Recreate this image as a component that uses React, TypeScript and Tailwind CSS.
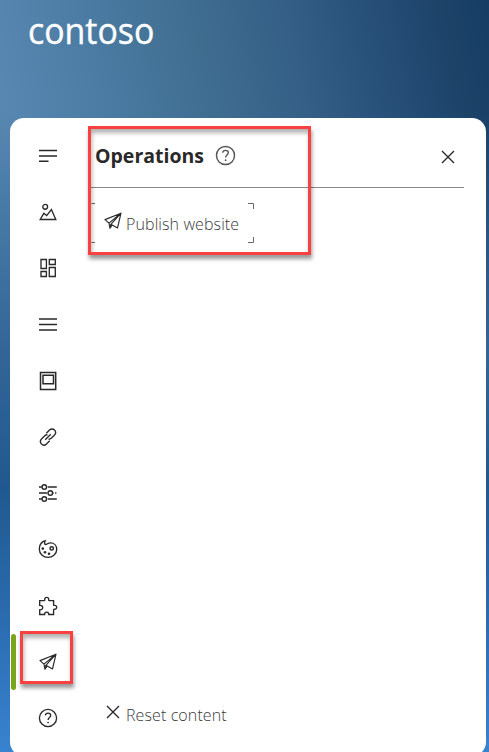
import React from "react";

type IconProps = { children: React.ReactNode; size?: number; className?: string };

function Icon({ children, size = 20, className = "" }: IconProps) {
  return (
    <svg width={size} height={size} viewBox="0 0 20 20" fill="none" stroke="currentColor" strokeWidth="1.35" className={`block shrink-0 ${className}`}>
      {children}
    </svg>
  );
}

const plane = <path d="M18 2.200 2 8.600l4 3.500 1 5.200 2.200-3.300 5.300 3L18 2.200ZM6 12.100 18 2.200 7.900 13.300l1.300.7M7.900 13.300 7 17.300" strokeWidth="1.150" strokeLinejoin="round" />;
const cross = <path d="m4 4 12 12M16 4 4 16" />;

function Help({ size = 20, className = "" }: { size?: number; className?: string }) {
  return (
    <Icon size={size} className={className}>
      <circle cx="10" cy="10" r="8.6" />
      <path d="M7.300 7.400C7.500 5.800 8.500 5.100 10 5.100c1.700 0 2.700.9 2.700 2.300 0 2-2.600 2.300-2.600 4.600" />
      <circle cx="10.1" cy="14.5" r=".85" fill="currentColor" stroke="none" />
    </Icon>
  );
}

const rail: { name: string; icon: React.ReactNode }[] = [
  { name: "Text", icon: <Icon><path d="M1 4.500h18M1 10h18M1 15.200h9.500" strokeWidth="1.5" /></Icon> },
  { name: "Images", icon: <Icon><circle cx="7.2" cy="4.8" r="2.400" /><path d="m2.200 17.500 3.600-6.200 2.900 2.300 4.700-6 4.400 9.900H2.200Z" /></Icon> },
  { name: "Widgets", icon: <Icon><path d="M3 1.500h5.400v9H3zM11.300 1.500h6v5h-6zM3 13.500h5.400v5H3zM11.300 9.500h6v9h-6z" /></Icon> },
  { name: "Menu", icon: <Icon><path d="M1 4h18M1 9.500h18M1 15h18" strokeWidth="1.4" /></Icon> },
  { name: "Frame", icon: <Icon><path d="M2.500 1.500h15.200v17H2.500zM5 4.200h10.500v8.500H5z" strokeWidth="1.5" /></Icon> },
  { name: "Links", icon: <Icon><path d="m7.200 12.800 5.600-5.600M8.300 6.300l3.200-3.200c1.500-1.500 3.600-1.500 5-.1 1.400 1.500 1.400 3.500 0 5l-3.300 3.300c-.7.7-1.700 1-2.700.9M11.700 13.700l-3.200 3.200c-1.500 1.500-3.600 1.500-5 .1-1.400-1.500-1.400-3.500 0-5l3.300-3.300c.7-.7 1.700-1 2.700-.9" /></Icon> },
  { name: "Settings", icon: <Icon><path d="M1 4h2.800m6 0h9M1 10h8m6 0h.500m1.600 0h1.300M1 16h2.800m6 0h9" strokeWidth="1.5" /><circle cx="6.300" cy="4" r="2.300" strokeWidth="1.400" /><circle cx="12.300" cy="10" r="2.300" strokeWidth="1.400" /><circle cx="6.300" cy="16" r="2.300" strokeWidth="1.400" /></Icon> },
  { name: "Styling", icon: <Icon><path d="M5.300 2.400C2.700 4.200 1.300 6.900 1.300 10c0 4.800 3.900 8.400 8.700 8.400s8.700-3.600 8.700-8c0-4-2.700-6.600-6.200-6.600-2 0-2.900 1.100-4.200 1.600-1.600.5-2.400-1-1.100-3.600L5.300 2.400Z" /><circle cx="13.700" cy="9.400" r="1.700" strokeWidth="1.500" /><g fill="currentColor" stroke="none"><circle cx="4.800" cy="9.600" r="1.300" /><circle cx="7" cy="13.300" r="1.300" /><circle cx="11" cy="14.800" r="1.300" /></g></Icon> },
  { name: "Extensions", icon: <Icon><path d="M1.700 4.600h4.500c.8 0 .5-.7.500-1.300C6.700 2 7.500 1.300 8.700 1.300s2 .7 2 2c0 .6-.3 1.300.5 1.300h4.400v4.200c0 .7.5.6 1 .6 1.300 0 2.100.8 2.100 1.900s-.9 2-2.100 1.900c-.5 0-1-.1-1 .6v4.700h-4.800c0-1.300-.7-2.400-2.100-2.400s-2.100 1.100-2.100 2.400H1.700v-4.700c2 .2 3-.9 3-2.200 0-1.400-1.100-2.400-3-2.200V4.600Z" /></Icon> },
  { name: "Operations", icon: <Icon>{plane}</Icon> },
  { name: "Help", icon: <Help /> },
];

function Corners() {
  return (
    <svg width="163" height="40" fill="none" stroke="#666" className="absolute left-0 top-0">
      <path d="M4 .5H.5M157 .5h5.500V6M4 39.500H.5M157 39.500h5.500V34" />
    </svg>
  );
}

export default function App() {
  return (
    <main className="relative flex h-[752px] w-[489px] flex-col overflow-hidden bg-[linear-gradient(180deg,transparent_110px,#336597_350px,#20598f_490px,#2b6cb0_620px,#3883d0_752px),linear-gradient(78deg,#5888b1_22%,#4b7ba2_38%,#3f6d90_54%,#355f86_68%,#28517a_80%,#1d4369_92%,#123a5f_104%)] font-['Open_Sans','Noto_Sans',sans-serif] text-[#292929]">
      <header className="h-[118px] shrink-0 pl-[28px] pt-[8px]">
        <div className="origin-left scale-x-[0.915] text-[37px] font-medium leading-[44px] text-white [-webkit-text-stroke:0.4px_white]">contoso</div>
      </header>
      <section className="ml-[10px] flex h-[638px] w-[476px] shrink-0 rounded-[14px] bg-white">
        <nav className="flex w-[76px] flex-col pt-[10px]">
          {rail.map(({ name, icon }) => (
            <button key={name} aria-label={name} className="relative flex h-[56.200px] w-full shrink-0 items-center justify-center">
              {name === "Operations" && <span className="absolute left-[1px] top-0 h-[56px] w-[5px] rounded-[3px] bg-[#7ba51c]" />}
              {icon}
            </button>
          ))}
        </nav>
        <div className="ml-[4px] flex w-[374px] flex-col">
          <div className="flex h-[70px] items-center border-b border-[#8a8a8a] pl-[5px] pt-[7px]">
            <h1 className="text-[19.500px] font-bold leading-[28px]">Operations</h1>
            <Help size={21} className="mb-[2px] ml-[11px] text-[#555]" />
            <button aria-label="Close" className="ml-auto mr-[6.500px] mt-[1px]"><Icon>{cross}</Icon></button>
          </div>
          <button className="relative ml-[1px] mt-[15px] flex h-[40px] w-[163px] items-center pl-[12px]">
            <Corners />
            <Icon className="mb-[4px]">{plane}</Icon>
            <span className="ml-[3px] mt-[2px] whitespace-nowrap text-[16px] font-light leading-[24px] tracking-[0.100px] text-[#3a3a3a]">Publish website</span>
          </button>
          <button className="mb-[28px] ml-[13px] mt-auto flex h-[26px] items-center">
            <Icon className="mb-[6px]">{cross}</Icon>
            <span className="ml-[3px] text-[16px] font-light leading-[24px] tracking-[0.100px] text-[#3a3a3a]">Reset content</span>
          </button>
        </div>
      </section>
      <div className="pointer-events-none absolute left-[88px] top-[126px] h-[129px] w-[223px] border-[3px] border-[#fa4141] shadow-[1px_4px_4px_rgba(0,0,0,0.4),inset_1px_4px_4px_rgba(0,0,0,0.3)]" />
      <div className="pointer-events-none absolute left-[20px] top-[631px] h-[53px] w-[53px] border-[3px] border-[#fa4141] shadow-[1px_4px_4px_rgba(0,0,0,0.4),inset_1px_4px_4px_rgba(0,0,0,0.3)]" />
    </main>
  );
}
